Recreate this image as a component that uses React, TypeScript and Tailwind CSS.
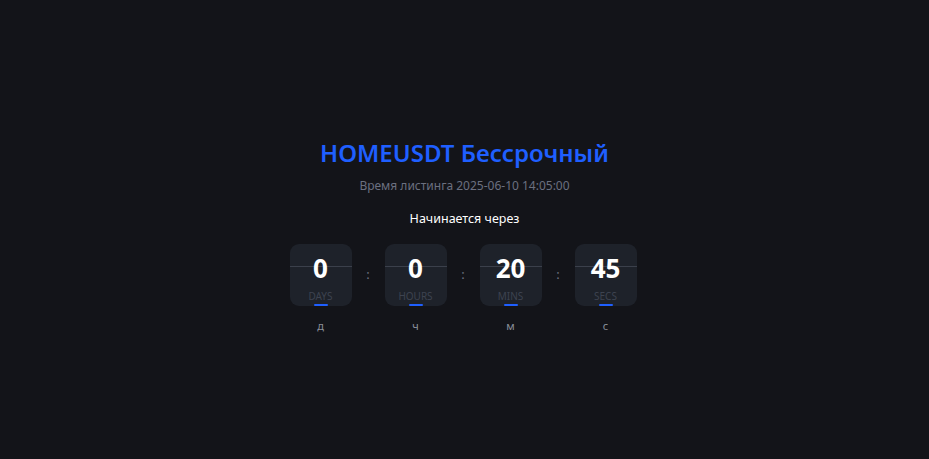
import React from "react";

const units = [
  { value: "0", label: "DAYS", short: "д" },
  { value: "0", label: "HOURS", short: "ч" },
  { value: "20", label: "MINS", short: "м" },
  { value: "45", label: "SECS", short: "с" },
];

function FlipBox({ value, label }: { value: string; label: string }) {
  return (
    <div className="relative w-[62px] h-[62px] rounded-[9px] bg-[#1e222a] flex flex-col items-center">
      <div className="absolute left-0 right-0 top-[22px] h-px bg-[#3b404b]" />
      <span className="relative mt-[7px] text-[26px] leading-[34px] font-bold text-white">
        {value}
      </span>
      <span className="mt-[5px] text-[10px] leading-[12px] text-[#3d4350] uppercase">
        {label}
      </span>
      <div className="absolute bottom-0 w-[14px] h-[2px] rounded-full bg-[#1f5fff]" />
    </div>
  );
}

export default function App() {
  return (
    <div
      className="w-full h-screen bg-[#131419] flex flex-col items-center pt-[137px]"
      style={{ fontFamily: '"Noto Sans", "Open Sans", sans-serif' }}
    >
      <h1 className="text-[24px] leading-[32px] font-semibold text-[#1f5fff]">
        HOMEUSDT Бессрочный
      </h1>
      <p className="mt-[9px] text-[12px] leading-[16px] text-[#6b7080]">
        Время листинга 2025-06-10 14:05:00
      </p>
      <p className="mt-[17px] text-[12.5px] leading-[16px] text-white">
        Начинается через
      </p>
      <div className="mt-[17px] flex pr-[3px]">
        {units.map((u, i) => (
          <React.Fragment key={u.label}>
            {i > 0 && (
              <div className="w-[33px] h-[62px] flex items-center justify-center text-[#6b7080] text-[13px]">
                :
              </div>
            )}
            <div className="flex flex-col items-center">
              <FlipBox value={u.value} label={u.label} />
              <span className="mt-[13px] text-[11px] leading-[14px] text-[#8a8f9a]">
                {u.short}
              </span>
            </div>
          </React.Fragment>
        ))}
      </div>
    </div>
  );
}
